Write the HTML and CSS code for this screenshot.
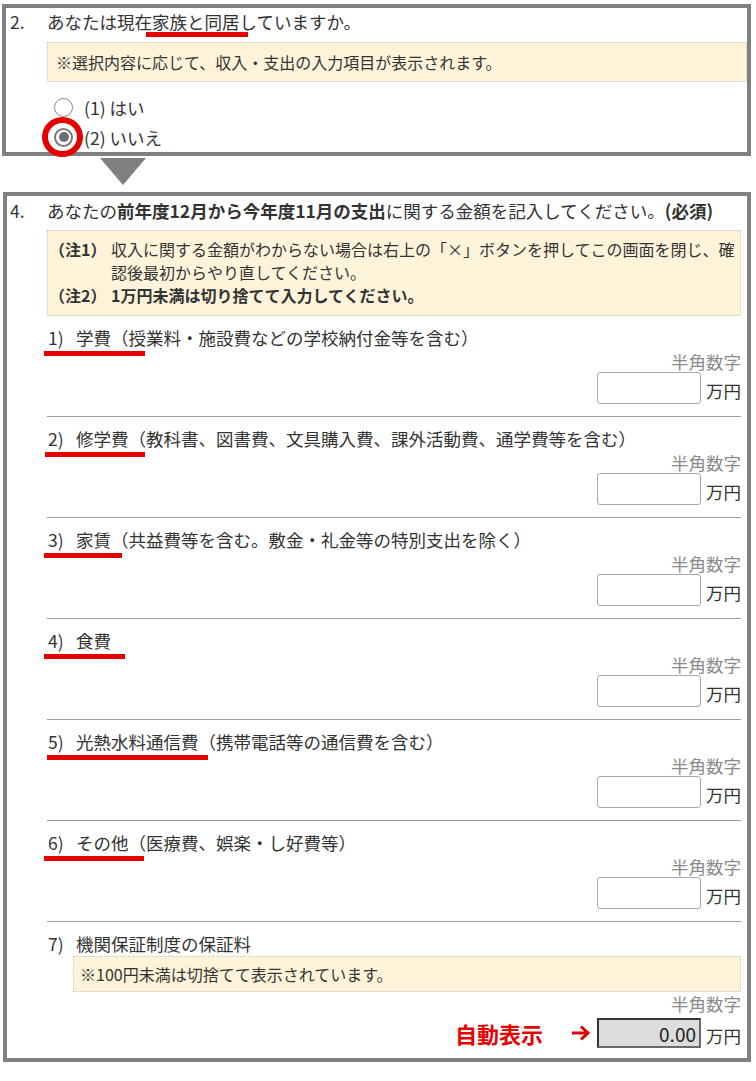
FILE: index.html
```html
<!DOCTYPE html>
<html lang="ja">
<head>
    <meta charset="UTF-8">
    <meta name="viewport" content="width=device-width, initial-scale=1.0">
    <title>支出の入力</title>
    <link rel="stylesheet" href="styles.css">
</head>
<body>
    <!-- 設問2 -->
    <div class="panel panel-first">
        <div class="q-head">
            <span class="q-num">2.</span>
            <span>あなたは現在<span class="mark-inline">家族と同居</span>していますか。</span>
        </div>
        <div class="q-body">
            <div class="note note-single">※選択内容に応じて、収入・支出の入力項目が表示されます。</div>
            <div class="choices">
                <label class="choice">
                    <span class="radio"></span>
                    <span class="choice-text">(1) はい</span>
                </label>
                <label class="choice">
                    <span class="radio radio-checked"></span>
                    <span class="choice-text">(2) いいえ</span>
                </label>
            </div>
        </div>
    </div>

    <div class="arrow-down"></div>

    <!-- 設問4 -->
    <div class="panel panel-second">
        <div class="q-head">
            <span class="q-num">4.</span>
            <span>あなたの<b>前年度12月から今年度11月の支出</b>に関する金額を記入してください。<b>(必須)</b></span>
        </div>
        <div class="q-body">
            <div class="note note-multi">
                <div class="note-row">
                    <span class="note-label">（注1）</span>
                    <span class="note-text">収入に関する金額がわからない場合は右上の「×」ボタンを押してこの画面を閉じ、確認後最初からやり直してください。</span>
                </div>
                <div class="note-row note-strong">
                    <span class="note-label">（注2）</span>
                    <span class="note-text">1万円未満は切り捨てて入力してください。</span>
                </div>
            </div>

            <div class="item">
                <div class="item-title mark mark-1"><span class="num">1)</span>学費（授業料・施設費などの学校納付金等を含む）</div>
                <div class="hint">半角数字</div>
                <div class="amount-row"><input class="amount" type="text"><span class="unit">万円</span></div>
            </div>

            <div class="item">
                <div class="item-title mark mark-2"><span class="num">2)</span>修学費（教科書、図書費、文具購入費、課外活動費、通学費等を含む）</div>
                <div class="hint">半角数字</div>
                <div class="amount-row"><input class="amount" type="text"><span class="unit">万円</span></div>
            </div>

            <div class="item">
                <div class="item-title mark mark-3"><span class="num">3)</span>家賃（共益費等を含む。敷金・礼金等の特別支出を除く）</div>
                <div class="hint">半角数字</div>
                <div class="amount-row"><input class="amount" type="text"><span class="unit">万円</span></div>
            </div>

            <div class="item">
                <div class="item-title mark mark-4"><span class="num">4)</span>食費</div>
                <div class="hint">半角数字</div>
                <div class="amount-row"><input class="amount" type="text"><span class="unit">万円</span></div>
            </div>

            <div class="item">
                <div class="item-title mark mark-5"><span class="num">5)</span>光熱水料通信費（携帯電話等の通信費を含む）</div>
                <div class="hint">半角数字</div>
                <div class="amount-row"><input class="amount" type="text"><span class="unit">万円</span></div>
            </div>

            <div class="item">
                <div class="item-title mark mark-6"><span class="num">6)</span>その他（医療費、娯楽・し好費等）</div>
                <div class="hint">半角数字</div>
                <div class="amount-row"><input class="amount" type="text"><span class="unit">万円</span></div>
            </div>

            <div class="item item-last">
                <div class="item-title"><span class="num">7)</span>機関保証制度の保証料</div>
                <div class="note note-sub">※100円未満は切捨てて表示されています。</div>
                <div class="hint">半角数字</div>
                <div class="amount-row amount-row-auto">
                    <span class="auto-label">自動表示</span>
                    <svg class="auto-arrow" width="20" height="18" viewBox="0 0 20 18">
                        <path d="M1 9 H16.5 M10 2.5 L17 9 L10 15.5" fill="none" stroke="#e60000" stroke-width="3"/>
                    </svg>
                    <input class="amount amount-auto" type="text" value="0.00" readonly>
                    <span class="unit">万円</span>
                </div>
            </div>
        </div>
    </div>
</body>
</html>
```

FILE: styles.css
```css
/* 全体 */
*,
*::before,
*::after {
    box-sizing: border-box;
}

body {
    margin: 0;
    padding: 4px 5px 0 2px;
    font-family: "Noto Sans CJK JP", sans-serif;
    font-size: 17.5px;
    color: #333;
    background-color: white;
}

b {
    font-weight: bold;
}

/* 設問の枠 */
.panel {
    border: 4px solid #808080;
    background-color: white;
}

.panel-first {
    padding: 2px 0 0 4px;
}

.panel-second {
    margin-left: 1px;
    padding: 3px 6px 0 3px;
}

.q-head {
    display: flex;
    line-height: 24px;
}

.q-num {
    flex: none;
    width: 37px;
}

.q-body {
    margin-left: 37px;
}

/* 赤線（注釈） */
.mark-inline {
    position: relative;
}

.mark-inline::after {
    content: "";
    position: absolute;
    left: -6px;
    right: -8px;
    bottom: -3px;
    height: 5px;
    background-color: #e60000;
}

/* 注意書き */
.note {
    background-color: #fff3da;
    border: 1px dotted #c9c9c9;
    font-size: 16px;
}

.note-single {
    margin-top: 8px;
    padding: 7px 8px;
    line-height: 24px;
}

.note-multi {
    margin-top: 7px;
    padding: 7px 4px 8px 1px;
    line-height: 23px;
}

.note-row {
    display: flex;
}

.note-label {
    flex: none;
    width: 62px;
    font-weight: bold;
}

.note-text {
    flex: 1;
}

.note-strong .note-text {
    font-weight: bold;
}

.note-sub {
    margin-left: 26px;
    padding: 6px 6px;
    line-height: 22px;
}

/* ラジオボタン */
.choices {
    margin-top: 10px;
}

.choice {
    display: flex;
    align-items: center;
    height: 30px;
    padding-left: 7px;
}

.choice-text {
    margin-left: 11px;
}

.radio {
    position: relative;
    flex: none;
    width: 19px;
    height: 19px;
    border: 1.5px solid #8a8a8a;
    border-radius: 50%;
    background-color: white;
}

.radio-checked {
    border: 2px solid #7a7a7a;
}

.radio-checked::before {
    content: "";
    position: absolute;
    left: 2.5px;
    top: 2.5px;
    width: 10px;
    height: 10px;
    border-radius: 50%;
    background-color: #6e6e6e;
}

.radio-checked::after {
    content: "";
    position: absolute;
    left: -14px;
    top: -13px;
    width: 41px;
    height: 40px;
    border: 6px solid #e60000;
    border-radius: 50%;
}

.arrow-down {
    width: 0;
    height: 0;
    margin: 2px 0 7px 98px;
    border-left: 23px solid transparent;
    border-right: 23px solid transparent;
    border-top: 27px solid #808080;
}

/* 入力項目 */
.item {
    padding: 10px 0 12px;
}

.item:first-of-type {
    padding-top: 11px;
}

.item + .item {
    border-top: 1px solid #9c9c9c;
}

.item-last {
    padding-bottom: 9px;
}

.item-title {
    position: relative;
    line-height: 24px;
}

.num {
    display: inline-block;
    width: 29px;
    padding-left: 1px;
}

.mark::after {
    content: "";
    position: absolute;
    left: -3px;
    top: 25px;
    height: 5px;
    background-color: #e60000;
}

.mark-1::after { width: 101px; }
.mark-2::after { width: 100px; left: -2px; }
.mark-3::after { width: 78px; }
.mark-4::after { width: 81px; }
.mark-5::after { width: 161px; left: 0; }
.mark-6::after { width: 100px; }

.hint {
    margin-top: 1px;
    line-height: 22px;
    text-align: right;
    color: #8a8a8a;
}

.amount-row {
    display: flex;
    justify-content: flex-end;
    align-items: flex-end;
    margin-top: -1px;
}

.amount {
    width: 104px;
    height: 32px;
    padding: 0 4px;
    border: 1px solid #a8a8a8;
    border-radius: 3px;
    font-family: inherit;
    font-size: 17.5px;
    color: #333;
    background-color: white;
}

.unit {
    margin-left: 5px;
    line-height: 26px;
}

.amount-row-auto {
    align-items: center;
    margin-top: 2px;
}

.amount-row-auto .unit {
    align-self: flex-end;
}

.auto-label {
    margin-right: 28px;
    font-size: 22px;
    font-weight: bold;
    color: #e60000;
}

.auto-arrow {
    margin-right: 6px;
}

.amount-auto {
    height: 30px;
    padding-right: 3px;
    border: 2px solid;
    border-color: #333 #6a6a6a #6a6a6a #333;
    border-radius: 0;
    background-color: #dcdcdc;
    text-align: right;
    font-size: 19px;
    color: #222;
}
```
